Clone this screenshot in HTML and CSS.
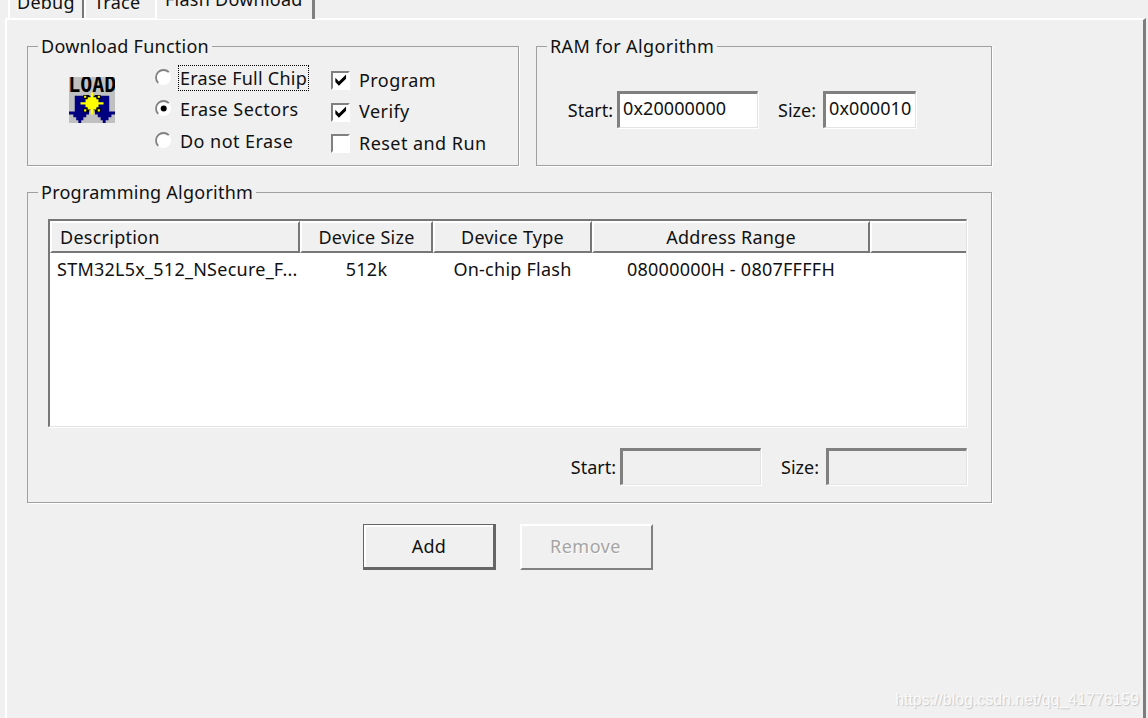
FILE: index.html
```html
<!DOCTYPE html>
<html lang="en">
<head>
  <meta charset="UTF-8" />
  <title>Flash Download</title>
  <link rel="stylesheet" href="styles.css">
</head>
<body>

  <div class="tabs">
    <div class="tab tab-debug">Debug</div>
    <div class="tab tab-trace">Trace</div>
    <div class="tab tab-flash">Flash Download</div>
  </div>

  <div class="panel">
    <div class="top-row">
      <fieldset class="group download">
        <legend>Download Function</legend>
        <div class="download-body">
          <svg class="load-icon" viewBox="0 0 32 32" width="46" height="46">
            <rect width="32" height="32" fill="#c0c0c0"/>
            <text class="load-text" x="-.6" y="10.6" textLength="33.4" lengthAdjust="spacingAndGlyphs">LOAD</text>
            <path class="arrow" d="M4 13H15V24H14V26H12V28H10V30H8.500V32H6.500V30H5V28H3V26H0V24H4Z"/>
            <path class="arrow" d="M17 13H28V24H32V26H29.500V28H27.500V30H25.500V32H23.500V30H22V28H20V26H18V24H17Z"/>
            <path d="M14 23h4v4h-4z" fill="#c0c0c0"/>
            <path d="M10 12.500h4v3h-4zM18 12.500h4v3h-4zM10 21.500h4v3h-4zM18 21.500h4v3h-4z" fill="#000"/>
            <path class="star" d="M15.200 11h1.600v3H19v1.500h1.500v2H24v1.600h-3.500v2H19V22.600h-2.200V26h-1.600v-3.400H13V21.100h-1.500v-2H8v-1.600h3.500v-2H13V14h2.200z"/>
            <path class="star" d="M10.500 13h1.500v1.500h-1.500zM20 13h1.500v1.500H20zM10.500 22.500h1.500V24h-1.500zM20 22.500h1.500V24H20z"/>
          </svg>

          <div class="radios">
            <label class="option">
              <svg class="radio" viewBox="0 0 17 17"><circle cx="8.5" cy="8.5" r="7.4" fill="#fff"/><path d="M3.2 13.8A7.3 7.3 0 0 1 13.8 3.2"/></svg>
              <span class="focused">Erase Full Chip</span>
            </label>
            <label class="option">
              <svg class="radio" viewBox="0 0 17 17"><circle cx="8.5" cy="8.5" r="7.4" fill="#fff"/><path d="M3.2 13.8A7.3 7.3 0 0 1 13.8 3.2"/><circle cx="8.7" cy="8.5" r="3"/></svg>
              <span>Erase Sectors</span>
            </label>
            <label class="option">
              <svg class="radio" viewBox="0 0 17 17"><circle cx="8.5" cy="8.5" r="7.4" fill="#fff"/><path d="M3.2 13.8A7.3 7.3 0 0 1 13.8 3.2"/></svg>
              <span>Do not Erase</span>
            </label>
          </div>

          <div class="checks">
            <label class="option">
              <span class="check"><svg viewBox="0 0 14 14"><path d="M2.2 4.500V8.500L5.500 11.8L12.2 5.300V1.500L5.500 7.900Z"/></svg></span>
              <span>Program</span>
            </label>
            <label class="option">
              <span class="check"><svg viewBox="0 0 14 14"><path d="M2.2 4.500V8.500L5.500 11.8L12.2 5.300V1.500L5.500 7.900Z"/></svg></span>
              <span>Verify</span>
            </label>
            <label class="option">
              <span class="check"></span>
              <span>Reset and Run</span>
            </label>
          </div>
        </div>
      </fieldset>

      <fieldset class="group ram">
        <legend>RAM for Algorithm</legend>
        <div class="ram-body">
          <span class="start-label">Start:</span>
          <div class="field">0x20000000</div>
          <span class="size-label">Size:</span>
          <div class="field short">0x000010</div>
        </div>
      </fieldset>
    </div>

    <fieldset class="group algorithm">
      <legend>Programming Algorithm</legend>
      <div class="list">
        <div class="list-row list-head">
          <div>Description</div>
          <div>Device Size</div>
          <div>Device Type</div>
          <div>Address Range</div>
          <div></div>
        </div>
        <div class="list-row list-item">
          <div>STM32L5x_512_NSecure_F...</div>
          <div>512k</div>
          <div>On-chip Flash</div>
          <div>08000000H - 0807FFFFH</div>
        </div>
      </div>
      <div class="range">
        <span class="start-label">Start:</span>
        <div class="field disabled"></div>
        <span class="size-label">Size:</span>
        <div class="field disabled"></div>
      </div>
    </fieldset>

    <div class="buttons">
      <div class="btn default">Add</div>
      <div class="btn off">Remove</div>
    </div>
  </div>

  <div class="watermark">https://blog.csdn.net/qq_41776159</div>

</body>
</html>
```

FILE: styles.css
```css
* {
  box-sizing: border-box;
}
body {
  margin: 0;
  width: 1148px;
  height: 718px;
  overflow: hidden;
  background-color: #f0f0f0;
  color: #111;
  font-family: "Noto Sans", "Noto Sans CJK SC", sans-serif;
  font-size: 18px;
  letter-spacing: .25px;
  line-height: 24px;
  white-space: nowrap;
}

/* Tabs */
.tabs {
  display: flex;
  height: 18px;
  padding-left: 8px;
}
.tab {
  height: 20px;
  margin-top: -2px;
  border-left: 2px solid #fff;
  line-height: 8px;
}
.tab-debug {
  width: 76px;
  padding-left: 7px;
  border-right: 2px solid #777;
}
.tab-trace {
  width: 71px;
  padding-left: 8px;
}
.tab-flash {
  width: 160px;
  height: 22px;
  margin-top: -3px;
  padding-left: 8px;
  border-right: 3px solid #808080;
  background-color: #f0f0f0;
  line-height: 4px;
  z-index: 1;
}

.panel {
  width: 1141px;
  height: 701px;
  margin-left: 5px;
  padding: 16px 0 0 20px;
  border-left: 2px solid #fff;
  border-top: 2px solid #fff;
  border-right: 3px solid #7c7c7c;
}

/* Group boxes */
.group {
  margin: 0;
  padding: 0;
  border: 1px solid #a0a0a0;
  box-shadow: 1px 1px 0 #fff;
  min-width: 0;
}
.group legend {
  height: 20px;
  margin-left: 10px;
  padding: 0 3px;
  line-height: 21px;
}
.top-row {
  display: flex;
  gap: 17px;
}
.download {
  width: 492px;
  height: 130px;
}
.ram {
  width: 456px;
  height: 130px;
}
.ram legend {
  letter-spacing: .4px;
}
.algorithm {
  width: 965px;
  height: 321px;
  margin-top: 16px;
}

.download-body {
  display: flex;
  padding-left: 41px;
}
.load-icon {
  margin-top: 21px;
}
.load-text {
  font: bold 15px "DejaVu Sans Mono", monospace;
  letter-spacing: 0;
}
.arrow {
  fill: #000080;
}
.star {
  fill: #ff0;
}
.radios {
  width: 176px;
  margin-left: 40px;
  padding-top: 6px;
}
.checks {
  padding-top: 8px;
}
.option {
  display: flex;
  align-items: center;
  height: 31.5px;
  letter-spacing: .45px;
}
.radio {
  width: 17px;
  height: 17px;
  margin: 0 8px 1px 0;
}
.radio path {
  fill: none;
  stroke: #808080;
  stroke-width: 1.8;
}
.focused {
  margin: 0 -1px;
  padding: 0 1px;
  outline: 1px dotted #000;
  letter-spacing: .25px;
}
.check {
  width: 19px;
  height: 19px;
  margin: 2px 9px 0 0;
  border: 2px solid #808080;
  border-right-color: #fff;
  border-bottom-color: #fff;
  background-color: #fff;
}
.check svg {
  display: block;
  width: 15px;
  height: 15px;
}

/* Edit fields */
.field {
  width: 141px;
  height: 37px;
  margin-right: 1px;
  padding-left: 3px;
  border: 3px solid #808080;
  border-right: 1px solid #e3e3e3;
  border-bottom: 1px solid #e3e3e3;
  box-shadow: 1px 1px 0 #fff;
  background-color: #fff;
  letter-spacing: .1px;
  line-height: 29px;
  overflow: hidden;
}
.short {
  width: 93px;
}
.disabled {
  background-color: #f0f0f0;
}
.start-label, .size-label {
  letter-spacing: 0;
  text-align: right;
}
.start-label {
  width: 46px;
  margin-right: 4px;
}
.size-label {
  width: 57px;
  margin-right: 7px;
}
.ram-body {
  display: flex;
  align-items: center;
  padding: 35px 0 0 30px;
}

/* Algorithm list */
.list {
  width: 919px;
  height: 208px;
  margin: 17px 0 0 20px;
  border: 2px solid #777;
  border-right: 1px solid #e3e3e3;
  border-bottom: 1px solid #e3e3e3;
  box-shadow: 1px 1px 0 #fff;
  background-color: #fff;
}
.list-row {
  display: grid;
  grid-template-columns: 250px 133px 159px 278px 1fr;
  text-align: center;
}
.list-row div:first-child {
  text-align: left;
}
.list-head div {
  height: 32px;
  border: 2px solid #fff;
  border-right-color: #777;
  border-bottom-color: #777;
  background-color: #f0f0f0;
  line-height: 29px;
}
.list-head div:first-child {
  padding-left: 8px;
}
.list-head div:last-child {
  border-right: none;
}
.list-item {
  line-height: 32px;
}
.list-item div:first-child {
  padding-left: 7px;
}
.range {
  display: flex;
  align-items: center;
  padding: 21px 0 0 542px;
}

/* Buttons */
.buttons {
  display: flex;
  gap: 24px;
  margin: 21px 0 0 336px;
}
.btn {
  width: 133px;
  height: 46px;
  border: 2px solid #fff;
  border-right-color: #808080;
  border-bottom-color: #808080;
  line-height: 41px;
  text-align: center;
}
.default {
  border: 1px solid #666;
  border-right-width: 3px;
  border-bottom-width: 3px;
  box-shadow: inset 2px 2px 0 #fff;
  line-height: 42px;
  padding-left: 1px;
}
.off {
  padding-right: 2px;
  color: #a5a5a5;
  letter-spacing: .5px;
  text-shadow: 1px 1px 0 #fff;
}

.watermark {
  position: absolute;
  right: 9px;
  bottom: 9px;
  font: 15.9px "Liberation Sans", sans-serif;
  letter-spacing: 0;
  color: #fafafa;
  text-shadow: 1px 1px 1px #c4c4c4;
}
```
